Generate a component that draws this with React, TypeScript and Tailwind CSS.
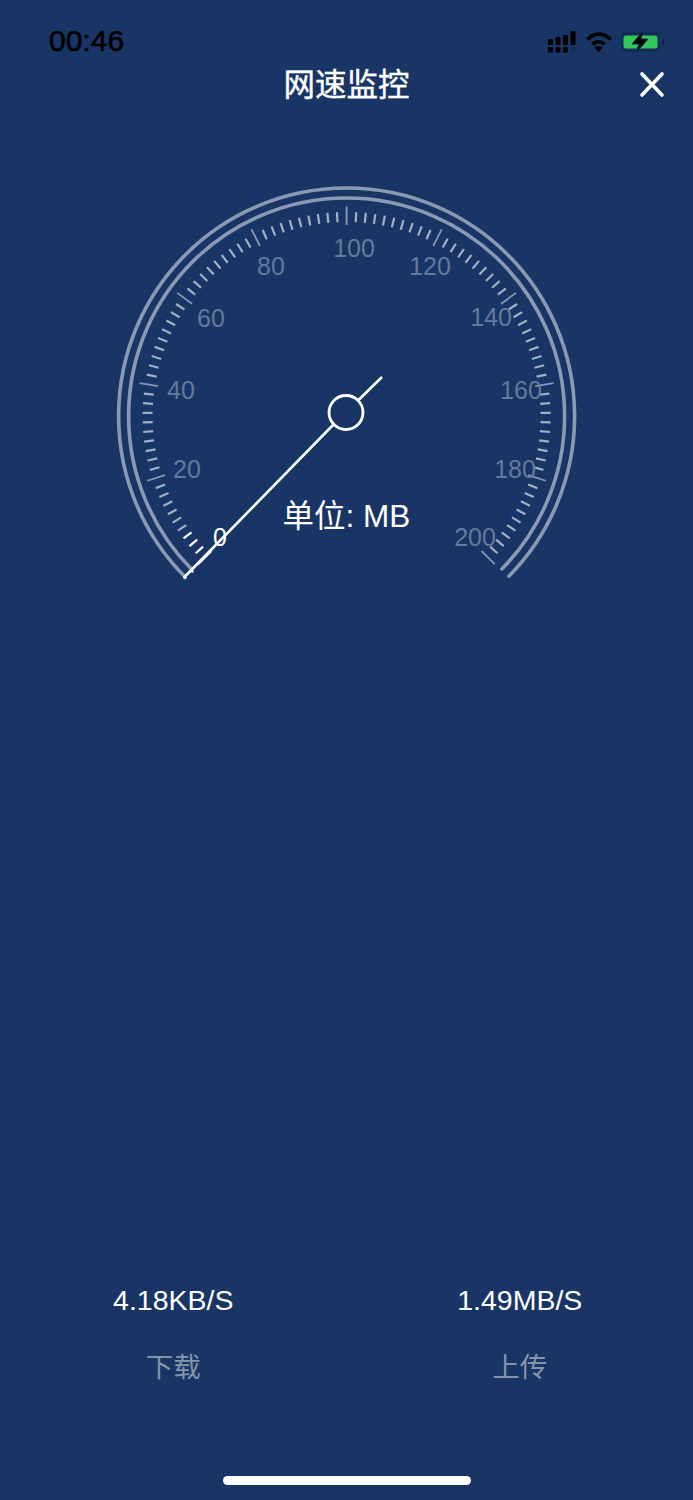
const CX = 346.6;
const CY = 416;

function polar(r: number, deg: number) {
  const a = (deg * Math.PI) / 180;
  return { x: CX + r * Math.sin(a), y: CY - r * Math.cos(a) };
}

function arc(r: number) {
  const s = polar(r, -134.6);
  const e = polar(r, 134.6);
  return `M${s.x} ${s.y} A${r} ${r} 0 1 1 ${e.x} ${e.y}`;
}

const labels: [string, number, number][] = [
  ["20", 187, 469],
  ["40", 181, 390],
  ["60", 211, 318],
  ["80", 271, 266],
  ["100", 354, 248],
  ["120", 430, 266],
  ["140", 491, 317],
  ["160", 521, 390],
  ["180", 515, 469],
  ["200", 475, 537],
];

function Gauge() {
  const ticks = [];
  for (let i = 0; i <= 100; i++) {
    const deg = -135 + i * 2.7;
    const major = i % 10 === 0;
    const a = polar(major ? 191 : 194, deg);
    const b = polar(major ? 209.5 : 204, deg);
    const white = i <= 3;
    ticks.push(
      <line
        key={i}
        x1={a.x}
        y1={a.y}
        x2={b.x}
        y2={b.y}
        stroke={white ? "#ffffff" : major ? "#8a9ab3" : "#a3afc4"}
        strokeWidth={major ? 1.8 : 2.2}
      />
    );
  }
  return (
    <svg width={693} height={440} viewBox="0 170 693 440" className="block">
      <path d={arc(228)} fill="none" stroke="#8a9ab4" strokeWidth={3.6} strokeLinecap="round" />
      <path d={arc(218)} fill="none" stroke="#8a9ab4" strokeWidth={3.6} strokeLinecap="round" />
      {ticks}
      {labels.map(([t, x, y]) => (
        <text
          key={t}
          x={x}
          y={y + 9}
          textAnchor="middle"
          fontSize={25}
          fill="#647a9c"
          fontFamily="'Liberation Sans', sans-serif"
        >
          {t}
        </text>
      ))}
      <text x={220} y={546} textAnchor="middle" fontSize={25} fill="#ffffff" fontFamily="'Liberation Sans', sans-serif">
        0
      </text>
      <line x1={184} y1={577.5} x2={333} y2={425} stroke="#ffffff" strokeWidth={2.6} />
      <line x1={358.5} y1={400} x2={382} y2={377} stroke="#ffffff" strokeWidth={2.6} />
      <line x1={189.5} y1={571} x2={193.5} y2={571.5} stroke="#ffffff" strokeWidth={2.4} />
      <circle cx={185} cy={577.5} r={1.8} fill="#ffffff" />
      <circle cx={346} cy={412.5} r={17} fill="none" stroke="#ffffff" strokeWidth={2.8} />
    </svg>
  );
}

function StatusIcons() {
  return (
    <svg width={120} height={26} viewBox="545 29 120 26" className="block mt-[5px]">
      <g fill="#000000">
        <rect x={548} y={39} width={5} height={6} rx={1} />
        <rect x={555.5} y={37} width={5} height={8} rx={1} />
        <rect x={563} y={35} width={5} height={10} rx={1} />
        <rect x={570.5} y={31} width={5} height={14} rx={1} />
        <rect x={548} y={47} width={5} height={5.5} rx={1} />
        <rect x={555.5} y={47} width={5} height={5.5} rx={1} />
        <rect x={563} y={47} width={5} height={5.5} rx={1} />
        <rect x={570.5} y={47} width={5} height={5.5} rx={1} opacity={0.15} />
      </g>
      <g fill="none" stroke="#000000" strokeWidth={3.6}>
        <path d="M587.5 39.5 A15 15 0 0 1 610.5 39.5" />
        <path d="M592.5 44.5 A8 8 0 0 1 604.5 44.5" />
      </g>
      <path d="M594.5 47.5 A6 6 0 0 1 602.5 47.5 L598.5 52 Z" fill="#000000" />
      <rect x={621} y={32} width={38.5} height={20} rx={5} fill="#122c56" />
      <rect x={623.5} y={35.5} width={34} height={13} rx={2.5} fill="#34c759" />
      <rect x={662} y={39} width={2} height={6} rx={1} fill="#0f2347" />
      <path d="M643 31 L632 44 H639 L636 53 L648 39 H641 Z" fill="#000000" stroke="#122c56" strokeWidth={1} />
    </svg>
  );
}

export default function App() {
  return (
    <div className="w-[693px] h-[1500px] bg-[#183565] flex flex-col font-['Liberation_Sans','Noto_Sans_CJK_SC',sans-serif] overflow-hidden">
      <div className="h-[56px] pt-[24px] pl-[49px] pr-[28px] flex items-start justify-between">
        <span className="text-[30px] leading-[34px] text-black [-webkit-text-stroke:0.6px_#000]">00:46</span>
        <StatusIcons />
      </div>
      <div className="h-[58px] flex items-center justify-center relative">
        <span className="text-[31.5px] leading-[40px] text-white [-webkit-text-stroke:0.4px_#fff]">网速监控</span>
        <svg width={26} height={27} viewBox="0 0 26 27" className="absolute left-[639px] top-[15px]">
          <path d="M3 3 L23 24 M23 3 L3 24" stroke="#ffffff" strokeWidth={3.6} strokeLinecap="round" />
        </svg>
      </div>
      <div className="h-[56px]" />
      <div className="relative">
        <Gauge />
        <span className="absolute left-0 w-[693px] text-center top-[325px] text-[31.5px] leading-[42px] text-white">
          单位: MB
        </span>
      </div>
      <div className="flex-1" />
      <div className="grid grid-cols-2 text-center">
        <div className="flex flex-col items-center">
          <span className="text-[28.5px] leading-[36px] text-white">4.18KB/S</span>
          <span className="mt-[31px] text-[27.5px] leading-[38px] text-[#8494ab]">下载</span>
        </div>
        <div className="flex flex-col items-center">
          <span className="text-[28.5px] leading-[36px] text-white">1.49MB/S</span>
          <span className="mt-[31px] text-[27.5px] leading-[38px] text-[#8494ab]">上传</span>
        </div>
      </div>
      <div className="h-[113px] pt-[89px] flex justify-center">
        <div className="w-[248px] h-[9px] rounded-full bg-white" />
      </div>
    </div>
  );
}
